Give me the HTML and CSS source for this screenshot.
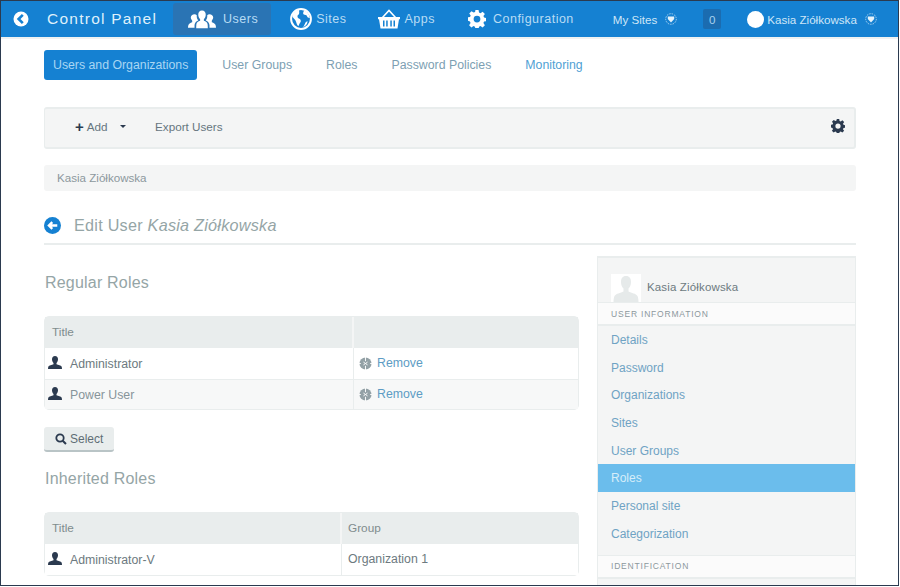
FILE: index.html
```html
<!DOCTYPE html>
<html lang="en">
<head>
<meta charset="utf-8">
<title>Control Panel</title>
<link rel="stylesheet" href="styles.css">
</head>
<body>
<svg class="defs" width="0" height="0">
  <symbol id="cog" viewBox="0 0 16 16"><path fill-rule="evenodd" d="M6.600 0h2.800l.4 2.200 1.300.6 1.900-1.300 2 2-1.300 1.900.6 1.300 2.200.4v2.800l-2.200.4-.6 1.300 1.300 1.900-2 2-1.900-1.300-1.300.6-.4 2.200H6.600l-.4-2.200-1.300-.6-1.900 1.300-2-2 1.300-1.900-.6-1.300L-.4 9.400V6.600l2.200-.4.6-1.300L1.100 3l2-2 1.900 1.300 1.300-.6zM8 5a3 3 0 1 0 0 6 3 3 0 0 0 0-6z"/></symbol>
  <symbol id="person" viewBox="0 0 14 14"><path d="M7 0c2 0 3 1.400 3 3.300 0 1.500-.6 2.900-1.500 3.700v1.300c1.700.7 4.500 1.200 5.100 2.300.3.700.4 1.700.4 2.400H0c0-.7.100-1.700.4-2.400C1 9.500 3.800 9 5.500 8.300V7C4.600 6.200 4 4.800 4 3.300 4 1.400 5 0 7 0z"/></symbol>
  <symbol id="remove" viewBox="0 0 14 14"><circle cx="7" cy="7" r="6.500"/><path d="M7 0v4.500M7 9.500V14M0 7h2M12 7h2M4.800 5.500 7 7l2.200-1.500M4.800 8.500 7 7l2.200 1.500" fill="none" stroke="#fff" stroke-width="1"/></symbol>
  <symbol id="caret" viewBox="0 0 12 12"><circle cx="6" cy="6" r="5.300" fill="none" stroke="currentColor" stroke-width="1" stroke-dasharray="1.500 1" opacity=".75"/><path d="M2.800 3.500h6.400V6L6 9.400 2.800 6z"/></symbol>
</svg>

<div class="frame">
  <header class="topbar">
    <a class="back" href="#">
      <svg class="back-icon" viewBox="0 0 16 16"><circle cx="8" cy="8" r="7.500" fill="#fff"/><path d="M9.800 3.800 5.600 8l4.200 4.200" fill="none" stroke="#1581d2" stroke-width="2.600"/></svg>
    </a>
    <span class="brand">Control Panel</span>
    <nav class="mainnav">
      <a class="mainlink is-current" href="#">
        <svg class="ico-users" viewBox="0 0 30 20" fill="#fff"><path d="M15 1c2.700 0 4 2 4 4.500 0 2-.8 3.700-2 4.800v1.700c2 .8 3.800 1.800 4 3.500.2 1 .2 2.500.2 4.500H8.800c0-2 0-3.500.2-4.500.2-1.700 2-2.700 4-3.500v-1.700c-1.200-1.100-2-2.800-2-4.800C11 3 12.300 1 15 1z"/><path d="M7 5c1 0 1.800.3 2.400.9-.2 2 .3 4 1.400 5.200v.5C8.600 12.500 7.400 14 7 16.500v3H0c0-2 .3-3.300 1-4 .9-1 2.300-1.600 3.500-2v-1.700C3.600 10.800 3 9.300 3 8.500 3 6.500 4.700 5 7 5zM23 5c-1 0-1.800.3-2.400.9.200 2-.3 4-1.400 5.200v.5c2.200.9 3.400 2.400 3.800 4.900v3h7c0-2-.3-3.300-1-4-.9-1-2.300-1.600-3.500-2v-1.700c.9-1 1.500-2.500 1.500-3.300C27 6.500 25.300 5 23 5z"/></svg>
        <span>Users</span>
      </a>
      <a class="mainlink" href="#">
        <svg class="ico-globe" viewBox="0 0 20 20"><circle cx="10" cy="10" r="9" fill="none" stroke="#fff" stroke-width="1.800"/><path fill="#fff" d="M8 1.500c-3 1-5 3-6 6 1 2 3 3 3.500 5 .5 1.500 1 3 2 4 .8-1 1-2.500 2-3.500 1-1.500 0-3-1.500-3.500-1-.5-1.500-1.500-1-3 1-.5 2-1.500 1-5zM13 2c-1 1.500-1.500 3-.5 4 1 .5 2.500 0 3 1.500.3 1 1 1.500 2.500 1.500-.3-3-2-5.500-5-7zM16 12c-1 0-2 1-2.500 2.500-.3 1-1 1.800-1.500 2.800 2-.5 3.700-2.500 4-5.300z"/></svg>
        <span>Sites</span>
      </a>
      <a class="mainlink" href="#">
        <svg class="ico-basket" viewBox="0 0 22 20"><path fill="none" stroke="#fff" stroke-width="1.600" d="M4.500 8.500 11 1.500l6.500 7"/><path fill="#fff" d="M0 8h22v2.200h-1L19.500 19.500h-17L1 10.200H0z"/><path fill="#1581d2" d="M5 11.500h1.500v6H5zM8.200 11.500h1.500v6H8.200zM12.300 11.500h1.500v6h-1.500zM15.500 11.500H17v6h-1.500z"/></svg>
        <span>Apps</span>
      </a>
      <a class="mainlink" href="#">
        <svg class="ico-cog"><use href="#cog"/></svg>
        <span>Configuration</span>
      </a>
    </nav>
    <div class="usernav">
      <a class="mysites" href="#">My Sites <svg class="caret"><use href="#caret"/></svg></a>
      <span class="count">0</span>
      <a class="account" href="#">
        <span class="avatar-dot"></span>
        <span>Kasia Ziółkowska</span>
        <svg class="caret"><use href="#caret"/></svg>
      </a>
    </div>
  </header>

  <main class="content">
    <nav class="pills">
      <a class="pill is-active" href="#">Users and Organizations</a>
      <a class="pill" href="#">User Groups</a>
      <a class="pill" href="#">Roles</a>
      <a class="pill" href="#">Password Policies</a>
      <a class="pill" href="#">Monitoring</a>
    </nav>

    <div class="toolbar">
      <a class="tool add" href="#"><b class="plus">+</b> Add <i class="down"></i></a>
      <a class="tool" href="#">Export Users</a>
      <svg class="tool-cog"><use href="#cog"/></svg>
    </div>

    <div class="crumb">Kasia Ziółkowska</div>

    <h1 class="title">
      <svg class="title-back" viewBox="0 0 16 16"><circle cx="8" cy="8" r="8" fill="#1581d2"/><path d="M12.500 8H5M7.800 4.800 4.600 8l3.200 3.200" fill="none" stroke="#fff" stroke-width="2.200"/></svg>
      <span>Edit User <em>Kasia Ziółkowska</em></span>
    </h1>

    <div class="columns">
      <section class="main-col">
        <h2 class="sub first">Regular Roles</h2>
        <table class="grid">
          <colgroup><col class="c-regular"><col></colgroup>
          <thead><tr><th>Title</th><th></th></tr></thead>
          <tbody>
            <tr>
              <td><svg class="person"><use href="#person"/></svg>Administrator</td>
              <td><a class="remove" href="#"><svg class="rm"><use href="#remove"/></svg>Remove</a></td>
            </tr>
            <tr class="alt">
              <td><svg class="person"><use href="#person"/></svg>Power User</td>
              <td><a class="remove" href="#"><svg class="rm"><use href="#remove"/></svg>Remove</a></td>
            </tr>
          </tbody>
        </table>
        <button class="select" type="button">
          <svg class="search" viewBox="0 0 12 12"><circle cx="5" cy="5" r="3.700" fill="none" stroke="#2b3a4f" stroke-width="1.800"/><path d="M7.700 7.700 11 11" stroke="#2b3a4f" stroke-width="2"/></svg>
          Select
        </button>
        <h2 class="sub second">Inherited Roles</h2>
        <table class="grid">
          <colgroup><col class="c-inherited"><col></colgroup>
          <thead><tr><th>Title</th><th>Group</th></tr></thead>
          <tbody>
            <tr>
              <td><svg class="person"><use href="#person"/></svg>Administrator-V</td>
              <td>Organization 1</td>
            </tr>
          </tbody>
        </table>
      </section>

      <aside class="side">
        <div class="side-user">
          <span class="portrait">
            <svg viewBox="0 0 30 28" width="30" height="28"><rect width="30" height="28" fill="#fff"/><path fill="#e6eaea" d="M15 2c3.500 0 5 2.500 5 6 0 3-1.200 5.500-2.500 6.500v3c3 1.500 7.500 2 9 4.500.7 1.500 1 3.500 1 6H2.500c0-2.500.3-4.500 1-6 1.500-2.500 6-3 9-4.500v-3C11.200 13.500 10 11 10 8c0-3.500 1.500-6 5-6z"/></svg>
          </span>
          <span class="side-name">Kasia Ziółkowska</span>
        </div>
        <div class="side-head">User Information</div>
        <ul class="side-list">
          <li><a href="#">Details</a></li>
          <li><a href="#">Password</a></li>
          <li><a href="#">Organizations</a></li>
          <li><a href="#">Sites</a></li>
          <li><a href="#">User Groups</a></li>
          <li class="is-on"><a href="#">Roles</a></li>
          <li><a href="#">Personal site</a></li>
          <li><a href="#">Categorization</a></li>
        </ul>
        <div class="side-head">Identification</div>
      </aside>
    </div>
  </main>
</div>
</body>
</html>
```
FILE: styles.css
```css
* { box-sizing: border-box; }
html, body { margin: 0; padding: 0; height: 100%; overflow: hidden; background: #fff; }
body { font-family: "Liberation Sans", Arial, sans-serif; font-size: 12.5px; color: #7f8c8d; }
a { color: inherit; text-decoration: none; }
.defs { position: absolute; }

.frame { width: 899px; height: 586px; border: 1px solid #2b3a4f; overflow: hidden; background: #fff; }

.topbar { display: flex; align-items: center; height: 36px; background: #1581d2; color: #cfe6f7; box-shadow: 0 2px 0 #eff2f2; }
.back { display: flex; width: 46px; padding-left: 12px; }
.back-icon { width: 16px; height: 16px; }
.brand { width: 126px; font-size: 15.500px; letter-spacing: 1.250px; color: #dff0fb; }
.mainnav { display: flex; align-items: center; gap: 4px; height: 100%; }
.mainlink { display: flex; align-items: center; gap: 4px; height: 32px; padding: 0 13px 0 15px; font-size: 12.500px; letter-spacing: .5px; color: #b8dcf4; border-radius: 3px; }
.mainlink.is-current { background: #2a74b4; gap: 7px; }
.ico-users { width: 28px; height: 20px; }
.ico-globe { width: 22px; height: 22px; }
.ico-basket { width: 22px; height: 20px; }
.ico-cog { width: 18px; height: 18px; margin: 0 3px 0 1px; fill: #fff; }
.usernav { display: flex; align-items: center; margin-left: 26px; font-size: 11.600px; color: #cfe6f7; }
.mysites { display: flex; align-items: center; gap: 8px; }
.caret { width: 12px; height: 12px; color: #cfe6f7; fill: #e6f3fb; }
.count { display: flex; align-items: center; justify-content: center; width: 18px; height: 20px; margin: 0 26px; border-radius: 2px; background: #1b6cb0; color: #a8d2ef; }
.account { display: flex; align-items: center; gap: 3px; }
.account .caret { margin-left: 5px; }
.avatar-dot { width: 17px; height: 17px; border-radius: 50%; background: #fff; }

.content { padding: 13px 42px 0 43px; }
.pills { display: flex; gap: 9px; height: 30px; font-size: 12.300px; }
.pill { display: flex; align-items: center; padding: 0 9px; margin-right: 7px; border-radius: 3px; color: #7d9fb3; white-space: nowrap; }
.pill:last-child { color: #4f9fd4; }
.pill.is-active { background: #1581d2; color: #a9d6f3; }

.toolbar { display: flex; align-items: center; height: 42px; margin-top: 27px; padding: 0 9px 4px 30px; background: #f4f5f5; border: 1px solid #e9eded; border-width: 2px 2px 2px 1px; border-radius: 3px; font-size: 11.700px; color: #66767f; }
.tool { display: flex; align-items: center; }
.add { width: 80px; gap: 3px; }
.plus { font-size: 15px; line-height: 1; color: #2b3a4f; }
.down { width: 0; height: 0; margin-left: 9px; border: 3.500px solid transparent; border-top-color: #2b3a4f; border-bottom-width: 0; }
.tool-cog { width: 14px; height: 14px; margin: 0 0 1px auto; fill: #2b3a4f; }

.crumb { display: flex; align-items: center; height: 26px; margin-top: 16px; padding: 0 0 2px 13px; background: #f4f5f5; border-radius: 3px; font-size: 11.600px; color: #8c989d; }

.title { display: flex; align-items: center; gap: 13px; height: 54px; margin: 0; padding-top: 16px; border-bottom: 2px solid #e9eded; font-size: 16.200px; font-weight: 400; letter-spacing: .25px; color: #95a5a6; }
.title em { font-style: italic; }
.title-back { width: 17px; height: 17px; flex: none; }

.columns { display: flex; justify-content: space-between; margin-top: 11px; }
.main-col { width: 536px; }
.sub { margin: 0; padding-left: 1px; font-size: 16px; font-weight: 400; letter-spacing: .2px; color: #95a5a6; line-height: 20px; }
.sub.first { margin-top: 17px; margin-bottom: 23px; }
.sub.second { margin-top: 17px; margin-bottom: 23px; }

.grid { width: 535px; border-collapse: separate; border-spacing: 0; border: 1px solid #e9eded; border-radius: 5px; table-layout: fixed; font-size: 12.300px; color: #6d7a80; }
.c-regular { width: 309px; }
.c-inherited { width: 297px; }
.grid th { height: 31px; padding: 0 7px 2px; background: #e9eded; text-align: left; font-weight: 400; font-size: 11.800px; color: #7f8c8d; border-right: 2px solid #f4f5f5; }
.grid th:last-child { border-right: 0; padding-left: 6px; }
.grid td { height: 31px; padding: 0 3px 1px; border-top: 1px solid #e9eded; border-right: 1px solid #e9eded; background: #fff; }
.grid td:last-child { border-right: 0; padding-left: 6px; }
.grid thead + tbody tr:first-child td { border-top: 0; }
.grid .alt td { height: 30px; background: #f7f8f8; color: #87949a; }
.person { width: 14px; height: 14px; margin-right: 8px; vertical-align: -2px; fill: #2b3a4f; }
.rm { width: 13px; height: 13px; margin-right: 5px; vertical-align: -3px; fill: #93a1a6; }
.remove { margin-left: -1px; color: #5d9cc4; }

.select { display: flex; align-items: center; gap: 3px; height: 25px; width: 70px; margin: 17px 0 0; padding: 0 0 0 11px; background: #e9eded; border: 0; border-bottom: 2px solid #b9c4c6; border-radius: 3px; font: inherit; font-size: 12px; color: #5f6d75; }
.search { width: 12px; height: 12px; }

.side { width: 259px; height: 340px; background: #f4f5f5; border: 1px solid #e9eded; border-width: 2px 1px 0; }
.side-user { display: flex; align-items: center; gap: 6px; height: 44px; padding: 16px 0 0 13px; }
.portrait { display: flex; width: 30px; height: 28px; overflow: hidden; }
.side-name { font-size: 11.500px; letter-spacing: .15px; color: #6d7a80; padding-bottom: 2px; }
.side-head { display: flex; align-items: center; height: 24px; padding-left: 13px; background: #fbfbfb; border: 1px solid #e9eded; border-width: 1px 0 2px; font-size: 8.500px; letter-spacing: .8px; text-transform: uppercase; color: #8c989d; }
.side-list { list-style: none; margin: 0 0 7px; padding: 0; font-size: 12px; color: #6fa3c4; }
.side-list li { display: flex; align-items: center; height: 27.700px; padding-left: 13px; }
.side-list .is-on { background: #6bbdec; color: #d6edf9; }
```
